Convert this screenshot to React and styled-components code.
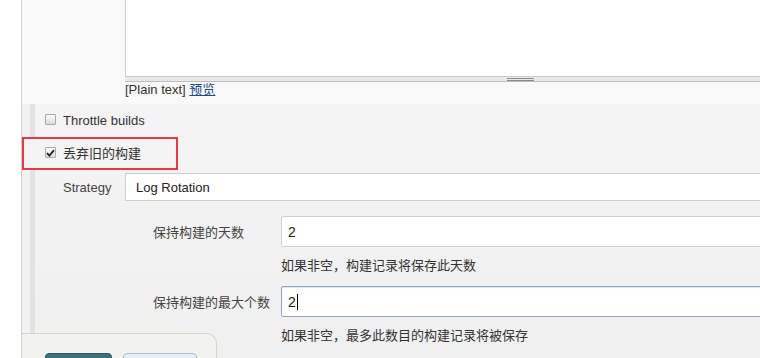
import React from 'react'
import styled, { createGlobalStyle } from 'styled-components'

const GlobalStyle = createGlobalStyle`
  html, body {
    margin: 0;
    padding: 0;
    height: 358px;
    overflow: hidden;
    background: #fff;
  }
  body {
    font-family: "Liberation Sans", Arial, "Noto Sans CJK SC", sans-serif;
    font-size: 13px;
    color: #333;
  }
`

const Page = styled.div`
  display: flex;
  width: 790px;
  height: 358px;
  position: relative;
  overflow: hidden;
`

const Gutter = styled.div`
  width: 21px;
  background: #fff;
  border-right: 1px solid #d2d2d2;
`

const Main = styled.div`
  flex: 1;
  display: flex;
  flex-direction: column;
  background: #f2f2f2;
`

const TopArea = styled.div`
  background: #f9f9f9;
  padding: 0 0 6px 103px;
`

const TextArea = styled.div`
  height: 76px;
  background: #fff;
  border: 1px solid #cfcfcf;
  border-top: none;
  border-bottom: none;
  box-sizing: border-box;
`

const Grip = styled.div`
  height: 6px;
  box-sizing: border-box;
  background: #e9e9e9;
  border-top: 1px solid #c8c8c8;
  border-bottom: 1px solid #bdbdbd;
  display: flex;
  align-items: center;
  padding-left: 382px;

  span {
    display: block;
    width: 27px;
    height: 1px;
    border-top: 1px solid #8a8a8a;
    border-bottom: 1px solid #8a8a8a;
  }
`

const Format = styled.div`
  line-height: 16px;
  height: 16px;
  color: #333;

  a {
    color: #204a87;
    text-decoration: underline;
  }
`

const Section = styled.div`
  flex: 1;
  margin-left: 8px;
  border-left: 5px solid #e2e2e2;
  background: linear-gradient(#f4f4f4, #f0f0f0);
`

const CheckRow = styled.div`
  position: relative;
  height: 33px;
  display: flex;
  align-items: center;
  padding-left: 10px;
  gap: 7px;

  ${p => p.$marked && `
    &::before {
      content: '';
      position: absolute;
      left: -13px;
      top: 0;
      width: 156px;
      height: 33px;
      box-sizing: border-box;
      border: 2px solid #e53a3f;
      background: #f4f4f4;
    }
  `}

  > * {
    position: relative;
    z-index: 1;
  }
`

const Box = styled.span`
  width: 11px;
  height: 11px;
  box-sizing: border-box;
  border: 1px solid #a9a9a9;
  border-radius: 1px;
  background: linear-gradient(#fdfdfd, #dcdcdc);
  display: flex;
  align-items: center;
  justify-content: center;
  margin-top: -2px;
`

const Label = styled.span`
  color: #333;
  line-height: 16px;
`

const FieldRow = styled.div`
  display: flex;
  align-items: center;
  padding-top: ${p => p.$top || 0}px;
`

const FieldLabel = styled.div`
  box-sizing: border-box;
  width: ${p => p.$width}px;
  padding-left: ${p => p.$indent}px;
  color: #444;
  flex-shrink: 0;
`

const Select = styled.div`
  flex: 1;
  height: 28px;
  margin: 3px 0;
  box-sizing: border-box;
  background: #fff;
  border: 1px solid #cfcfcf;
  padding-left: 10px;
  display: flex;
  align-items: center;
  color: #222;
`

const Input = styled.div`
  flex: 1;
  height: 31px;
  box-sizing: border-box;
  background: #fff;
  border: 1px solid ${p => (p.$focused ? '#8aa6cb' : '#cfcfcf')};
  box-shadow: ${p => (p.$focused ? 'inset 0 1px 1px #dbe6f3' : 'none')};
  border-radius: 2px;
  padding-left: 6px;
  display: flex;
  align-items: center;
  color: #222;
  font-size: 14px;
`

const Caret = styled.span`
  display: inline-block;
  width: 1px;
  height: 16px;
  background: #000;
  margin-left: 1px;
`

const Help = styled.div`
  padding-left: 246px;
  margin-top: 11px;
  line-height: 16px;
  color: #333;
`

const BottomBar = styled.div`
  position: absolute;
  left: 22px;
  top: 333px;
  width: 195px;
  height: 25px;
  overflow: hidden;
  box-sizing: border-box;
  background: #f2f3ef;
  border: 1px solid #d3d8cf;
  border-left: none;
  border-bottom: none;
  border-top-right-radius: 10px;
  display: flex;
  align-items: flex-start;
  gap: 11px;
  padding: 19px 0 0 23px;
`

const Button = styled.div`
  width: ${p => p.$width}px;
  height: 24px;
  flex-shrink: 0;
  box-sizing: border-box;
  border-radius: 4px;
  background: ${p => (p.$primary ? '#3e6e7c' : '#e6eff4')};
  border: 1px solid ${p => (p.$primary ? '#2f5663' : '#a7c0cf')};
`

const Check = () => (
  <svg width="9" height="8" viewBox="0 0 9 8">
    <path d="M1 4.2 L3.4 6.6 L8 1.2" fill="none" stroke="#222" strokeWidth="1.8" />
  </svg>
)

const App = () => {
  return (
    <Page>
      <GlobalStyle />
      <Gutter />
      <Main>
        <TopArea>
          <TextArea />
          <Grip><span /></Grip>
          <Format>[Plain text] <a href="#">预览</a></Format>
        </TopArea>
        <Section>
          <CheckRow>
            <Box />
            <Label>Throttle builds</Label>
          </CheckRow>
          <CheckRow $marked>
            <Box><Check /></Box>
            <Label>丢弃旧的构建</Label>
          </CheckRow>
          <FieldRow>
            <FieldLabel $width={90} $indent={28}>Strategy</FieldLabel>
            <Select>Log Rotation</Select>
          </FieldRow>
          <FieldRow $top={12}>
            <FieldLabel $width={246} $indent={118}>保持构建的天数</FieldLabel>
            <Input>2</Input>
          </FieldRow>
          <Help>如果非空，构建记录将保存此天数</Help>
          <FieldRow $top={12}>
            <FieldLabel $width={246} $indent={118}>保持构建的最大个数</FieldLabel>
            <Input $focused>2<Caret /></Input>
          </FieldRow>
          <Help>如果非空，最多此数目的构建记录将被保存</Help>
        </Section>
      </Main>
      <BottomBar>
        <Button $primary $width={67} />
        <Button $width={74} />
      </BottomBar>
    </Page>
  )
}

export default App
